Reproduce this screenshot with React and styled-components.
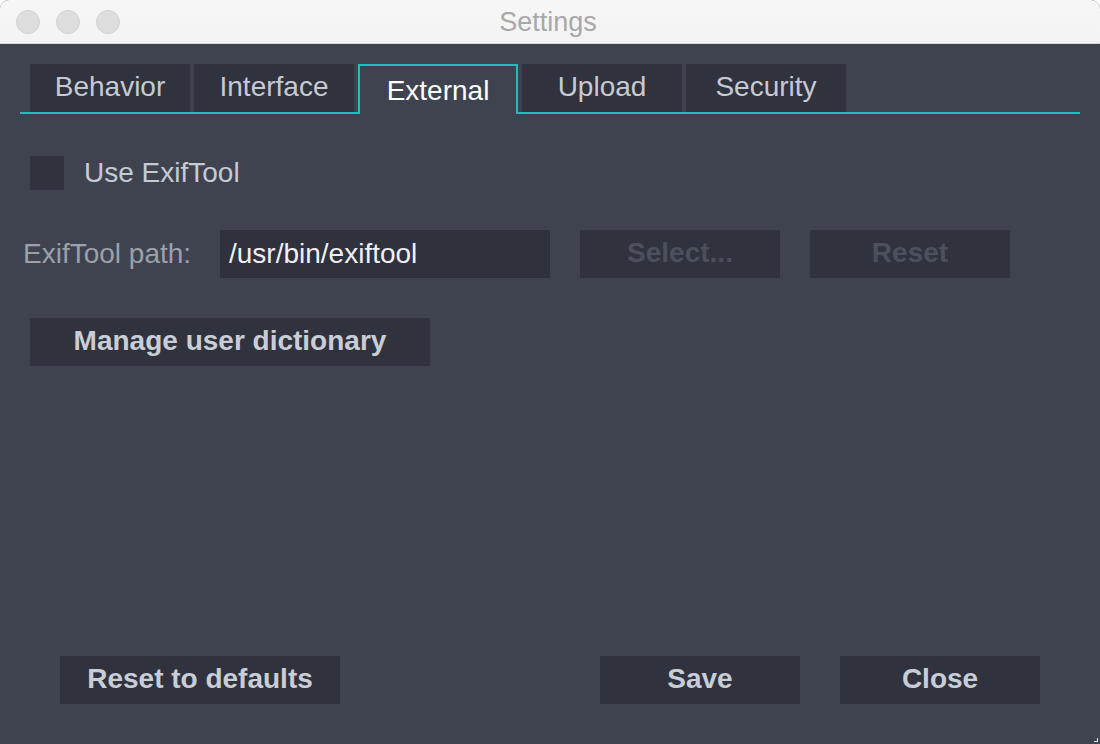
import React, { useState } from "react";
import styled, { createGlobalStyle } from "styled-components";

const Global = createGlobalStyle`
  html, body { margin: 0; padding: 0; background: #ffffff; }
  body { font-family: "Liberation Sans", Arial, Helvetica, sans-serif; }
  * { box-sizing: border-box; }
`;

const Window = styled.div`
  width: 1100px;
  height: 744px;
  display: flex;
  flex-direction: column;
  background: #3f4350;
  border-radius: 9px 9px 0 0;
  overflow: hidden;
  position: relative;
`;

const TitleBar = styled.div`
  height: 44px;
  flex: none;
  display: grid;
  grid-template-columns: 1fr auto 1fr;
  align-items: center;
  background: linear-gradient(#f7f7f7, #f3f3f3);
  border-bottom: 1px solid #d6d6d6;
  padding: 0 16px;
`;

const Lights = styled.div`
  display: flex;
  gap: 16px;
`;

const Light = styled.span`
  width: 24px;
  height: 24px;
  border-radius: 50%;
  background: #dedede;
  border: 1px solid #d2d2d2;
`;

const Title = styled.div`
  font-size: 27px;
  color: #a8a8a8;
  line-height: 1;
  margin-left: -4px;
  padding-top: 2px;
`;

const Content = styled.div`
  flex: 1;
  display: flex;
  flex-direction: column;
  padding: 20px 20px 0;
`;

const TabBar = styled.div`
  display: flex;
  align-items: flex-start;
  gap: 4px;
  padding-left: 10px;
  height: 50px;
  border-bottom: 2px solid #20bcc2;
`;

const Tab = styled.div`
  width: 160px;
  height: ${(p) => (p.$active ? "50px" : "48px")};
  display: flex;
  align-items: center;
  justify-content: center;
  font-size: 28px;
  color: ${(p) => (p.$active ? "#ffffff" : "#c6cad3")};
  background: ${(p) => (p.$active ? "#3f4350" : "#30323d")};
  border: ${(p) => (p.$active ? "2px solid #20bcc2" : "none")};
  border-bottom: none;
  padding-top: ${(p) => (p.$active ? "2px" : "0")};
  padding-bottom: ${(p) => (p.$active ? "0" : "3px")};
  position: relative;
  z-index: 1;
  cursor: default;
`;

const Panel = styled.div`
  flex: 1;
  display: flex;
  flex-direction: column;
  padding-top: 42px;
`;

const CheckRow = styled.label`
  display: flex;
  align-items: center;
  gap: 20px;
  padding-left: 10px;
  height: 34px;
  font-size: 28px;
  color: #c6cad3;
`;

const CheckBox = styled.span`
  width: 34px;
  height: 34px;
  background: #30323d;
`;

const PathRow = styled.div`
  display: flex;
  align-items: center;
  margin-top: 40px;
  height: 48px;
`;

const Label = styled.span`
  width: 200px;
  padding-left: 3px;
  font-size: 28px;
  color: #9ca0a9;
`;

const Input = styled.div`
  width: 330px;
  height: 48px;
  background: #2f313c;
  color: #eef0f4;
  font-size: 28px;
  display: flex;
  align-items: center;
  padding-left: 9px;
  margin-right: 30px;
`;

const Button = styled.button`
  width: ${(p) => p.$w || 200}px;
  height: 48px;
  flex: none;
  border: none;
  background: #30323d;
  color: ${(p) => (p.disabled ? "#4b505c" : "#c9cdd6")};
  font-family: "Liberation Sans", Arial, sans-serif;
  font-weight: bold;
  font-size: 28px;
  padding: 0 0 2px;
  margin-right: ${(p) => p.$mr || 0}px;
`;

const ManageWrap = styled.div`
  margin-top: 40px;
  padding-left: 10px;
`;

const Footer = styled.div`
  display: flex;
  align-items: center;
  padding: 0 60px 40px 60px;
  gap: 40px;
`;

const Spacer = styled.div`
  flex: 1;
`;

const Grip = styled.span`
  position: absolute;
  right: 2px;
  bottom: 2px;
  width: 4px;
  height: 4px;
  border-right: 1px solid #e6e6e6;
  border-bottom: 1px solid #e6e6e6;
`;

const tabs = ["Behavior", "Interface", "External", "Upload", "Security"];

export default function App() {
  const [active, setActive] = useState("External");
  return (
    <>
      <Global />
      <Window>
        <TitleBar>
          <Lights>
            <Light />
            <Light />
            <Light />
          </Lights>
          <Title>Settings</Title>
          <div />
        </TitleBar>
        <Content>
          <TabBar>
            {tabs.map((t) => (
              <Tab key={t} $active={t === active} onClick={() => setActive(t)}>
                {t}
              </Tab>
            ))}
          </TabBar>
          <Panel>
            <CheckRow>
              <CheckBox />
              Use ExifTool
            </CheckRow>
            <PathRow>
              <Label>ExifTool path:</Label>
              <Input>/usr/bin/exiftool</Input>
              <Button disabled $mr={30}>Select...</Button>
              <Button disabled>Reset</Button>
            </PathRow>
            <ManageWrap>
              <Button $w={400}>Manage user dictionary</Button>
            </ManageWrap>
          </Panel>
        </Content>
        <Footer>
          <Button $w={280}>Reset to defaults</Button>
          <Spacer />
          <Button>Save</Button>
          <Button>Close</Button>
        </Footer>
        <Grip />
      </Window>
    </>
  );
}
